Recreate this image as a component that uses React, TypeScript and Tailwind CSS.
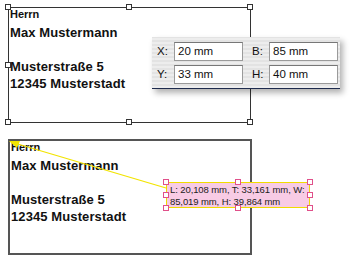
import React from 'react';

const FONT = { fontFamily: '"Liberation Sans", Arial, sans-serif' };

function Address() {
  return (
    <div className="pl-[1px] text-[#111] font-bold" style={FONT}>
      <div className="text-[11px] leading-[13px]">Herrn</div>
      <div className="mt-[3px] text-[13px] leading-[17px] tracking-[0.1px]">
        <div>Max Mustermann</div>
        <div>&nbsp;</div>
        <div>Musterstraße 5</div>
        <div>12345 Musterstadt</div>
      </div>
    </div>
  );
}

function Handle({ x, y, pink }: { x: number; y: number; pink?: boolean }) {
  return (
    <div
      className={`absolute w-[6px] h-[6px] bg-white border ${pink ? 'border-[#e0508a]' : 'border-[#333]'}`}
      style={{ left: x - 3, top: y - 3 }}
    />
  );
}

function Field({ label, value }: { label: string; value: string }) {
  return (
    <div className="flex items-center">
      <span className="w-[22px] pl-[5px] text-[11.5px] text-[#111]">{label}</span>
      <div className="w-[69px] h-[19px] bg-white border border-[#9a9a9a] border-t-[#777] flex items-center pl-[3px] text-[11.5px] text-[#111]">
        {value}
      </div>
    </div>
  );
}

export default function App() {
  const topHandles = [
    [8, 7], [129, 7], [250, 7], [8, 65], [8, 122], [129, 122], [250, 122],
  ];
  const pinkHandles = [
    [166, 182], [238, 182], [310, 182], [166, 195], [310, 195], [166, 208], [238, 208], [310, 208],
  ];
  return (
    <div className="relative w-[353px] h-[267px] bg-white overflow-hidden">
      {/* upper frame, selected */}
      <div className="absolute left-[8px] top-[7px] w-[243px] h-[116px] border border-[#333]">
        <Address />
      </div>
      {topHandles.map(([x, y], i) => (
        <Handle key={i} x={x} y={y} />
      ))}

      {/* position panel */}
      <div
        className="absolute left-[152px] top-[37px] w-[188px] h-[52px] border-b border-[#1e2b4d] shadow-[3px_4px_6px_rgba(0,0,0,0.3)] bg-[repeating-linear-gradient(0deg,#ededed_0px,#ededed_2px,#e3e3e3_2px,#e3e3e3_4px)] flex flex-col gap-[4px] pt-[5px]"
        style={FONT}
      >
        <div className="flex gap-[4px]">
          <Field label="X:" value="20 mm" />
          <Field label="B:" value="85 mm" />
        </div>
        <div className="flex gap-[4px]">
          <Field label="Y:" value="33 mm" />
          <Field label="H:" value="40 mm" />
        </div>
      </div>

      {/* lower frame */}
      <div className="absolute left-[8px] top-[139px] w-[244px] h-[116px] border-2 border-[#555]">
        <Address />
      </div>

      {/* yellow measuring line */}
      <svg className="absolute left-0 top-0" width={353} height={267}>
        <line x1={11} y1={142} x2={166} y2={188} stroke="#f2e400" strokeWidth={1.3} />
        <polygon points="9,141 20,141 17,148" fill="#f2e400" />
      </svg>

      {/* info tooltip */}
      <div
        className="absolute left-[166px] top-[182px] w-[144px] h-[26px] bg-[#f8cbe5] border border-[#f0dc00] text-[#222] text-[9.5px] leading-[12px] pl-[3px] pt-[1px] tracking-[-0.1px] whitespace-nowrap"
        style={FONT}
      >
        <div>L: 20,108 mm, T: 33,161 mm, W:</div>
        <div>85,019 mm, H: 39,864 mm</div>
      </div>
      {pinkHandles.map(([x, y], i) => (
        <Handle key={i} x={x} y={y} pink />
      ))}
    </div>
  );
}
